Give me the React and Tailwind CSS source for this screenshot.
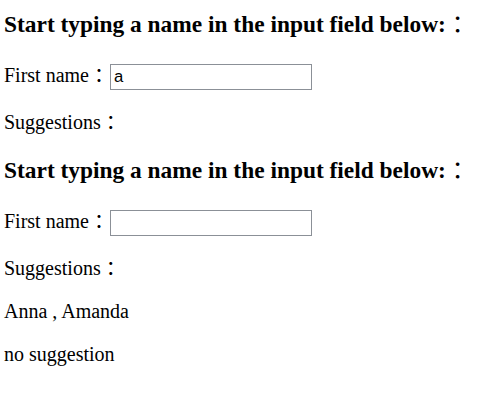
import React from 'react';

const serif = { fontFamily: '"Liberation Serif", "Noto Sans CJK SC", serif' };

function Colon() {
  return (
    <span
      className="font-normal leading-[1px]"
      style={{ fontFamily: '"Noto Sans CJK SC", sans-serif' }}
    >
      ：
    </span>
  );
}

function Block({ value }) {
  return (
    <div>
      <h3 className="font-bold text-[23.4px] leading-[27px] text-black">
        Start typing a name in the input field below: <Colon />
      </h3>
      <div className="mt-[26px] flex items-baseline text-[20px] leading-[23px]">
        <span>
          First name <Colon />
        </span>
        <input
          readOnly
          value={value}
          className="ml-[-4px] w-[202px] h-[26px] border border-[#8b9097] px-[3px] text-[16.7px] bg-white outline-none"
          style={{ fontFamily: '"Liberation Sans", Arial, sans-serif' }}
        />
      </div>
      <p className="mt-[21px] text-[20px] leading-[23px]">
        Suggestions <Colon />
      </p>
    </div>
  );
}

export default function App() {
  return (
    <div className="w-[478px] h-[400px] bg-white text-black pl-[4px] pt-[11px]" style={serif}>
      <Block value="a" />
      <div className="mt-[23px]">
        <Block value="" />
      </div>
      <p className="mt-[20px] text-[20px] leading-[23px]">Anna , Amanda</p>
      <p className="mt-[20px] text-[20px] leading-[23px]">no suggestion</p>
    </div>
  );
}
